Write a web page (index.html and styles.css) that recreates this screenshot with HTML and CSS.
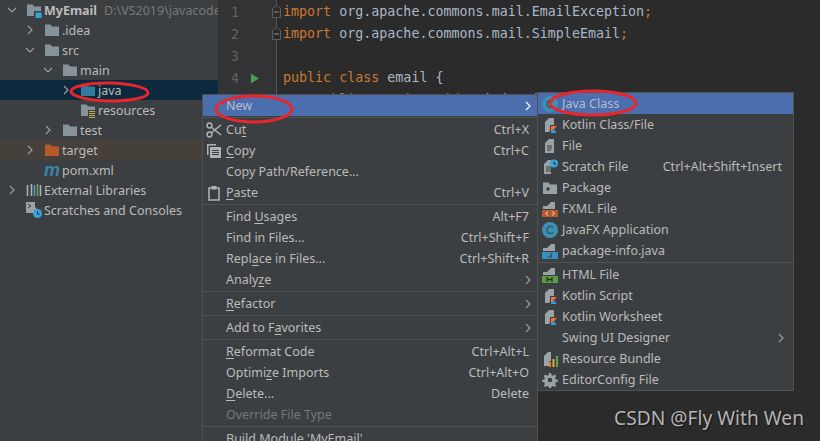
FILE: index.html
```html
<!DOCTYPE html>
<html lang="en">
<head>
<meta charset="utf-8">
<title>MyEmail</title>
<link rel="stylesheet" href="styles.css">
</head>
<body>
<svg class="sprite" width="0" height="0">
  <defs>
    <symbol id="i-folder" viewBox="0 0 16 16"><path d="M1 2.5h5.5l1.5 2h7V14H1z"/></symbol>
    <symbol id="i-chev-r" viewBox="0 0 10 10"><path d="M3 1l4 4-4 4" fill="none" stroke="#9a9da0" stroke-width="1.2"/></symbol>
    <symbol id="i-chev-d" viewBox="0 0 10 10"><path d="M1 3l4 4 4-4" fill="none" stroke="#9a9da0" stroke-width="1.2"/></symbol>
    <symbol id="i-file" viewBox="0 0 16 16"><path d="M3 5l4-4h5v14H3z" fill="#9aa2a6"/><path d="M5 8h5M5 10h5M5 12h4" stroke="#3c3f41" stroke-width="1"/></symbol>
    <symbol id="i-kotlin" viewBox="0 0 16 16"><path d="M3 5l4-4h5v7L7 15H3z" fill="#9aa2a6"/><path d="M8 8h8l-4 4 4 4H8z" fill="#3c3f41"/><path d="M9 9h6l-6 6z" fill="#f26d3d"/><path d="M9 16l3-3 3 3z" fill="#2d9fd8"/><path d="M9 15l3-3 1 1-3 3H9z" fill="#2d9fd8"/></symbol>
  </defs>
</svg>

<div class="ide">
  <aside class="tree">
    <div class="row l0"><svg class="chev"><use href="#i-chev-d"/></svg>
      <svg class="ico" viewBox="0 0 16 16"><path class="f-grey" d="M1 2.5h5.5l1.5 2h7V14H1z"/><rect x="8" y="9" width="8" height="7" fill="#3c3f41"/><rect x="9.500" y="10.500" width="6" height="6" fill="#36a3dd"/></svg>
      <b class="name">MyEmail</b><span class="path">D:\VS2019\javacode\MyEmail</span></div>
    <div class="row l1"><svg class="chev"><use href="#i-chev-r"/></svg><svg class="ico f-grey"><use href="#i-folder"/></svg><span class="name">.idea</span></div>
    <div class="row l1"><svg class="chev"><use href="#i-chev-d"/></svg><svg class="ico f-grey"><use href="#i-folder"/></svg><span class="name">src</span></div>
    <div class="row l2"><svg class="chev"><use href="#i-chev-d"/></svg><svg class="ico f-grey"><use href="#i-folder"/></svg><span class="name">main</span></div>
    <div class="row l3 selected"><svg class="chev"><use href="#i-chev-r"/></svg><svg class="ico f-blue"><use href="#i-folder"/></svg><span class="name">java</span></div>
    <div class="row l3"><span class="chev"></span>
      <svg class="ico" viewBox="0 0 16 16"><path class="f-grey" d="M1 2.500h5.500l1.500 2h7V14H1z"/><rect x="8" y="8" width="8" height="8" fill="#3c3f41"/><path d="M9 9.500h6M9 11.500h6M9 13.500h6M9 15.500h6" stroke="#c9a94e"/></svg>
      <span class="name">resources</span></div>
    <div class="row l2"><svg class="chev"><use href="#i-chev-r"/></svg><svg class="ico f-grey"><use href="#i-folder"/></svg><span class="name">test</span></div>
    <div class="row l1 excluded"><svg class="chev"><use href="#i-chev-r"/></svg><svg class="ico f-orange"><use href="#i-folder"/></svg><span class="name">target</span></div>
    <div class="row l1"><span class="chev"></span><span class="ico pom">m</span><span class="name">pom.xml</span></div>
    <div class="row l0"><svg class="chev"><use href="#i-chev-r"/></svg>
      <svg class="ico" viewBox="0 0 16 16"><path d="M1.500 3v11M5.500 2v12" stroke="#a7afb3" stroke-width="1.600"/><path d="M8.500 3v11" stroke="#4e9fc4" stroke-width="1.600"/><path d="M11.500 2v12" stroke="#62a052" stroke-width="1.600"/><path d="M14.500 3v11" stroke="#a7afb3" stroke-width="1.600"/></svg>
      <span class="name">External Libraries</span></div>
    <div class="row l0"><span class="chev"></span>
      <svg class="ico" viewBox="0 0 16 16"><path d="M0 0h9v5l3 3v3H0z" fill="#9aa2a6"/><path d="M2 2l3 2-3 2" fill="none" stroke="#3c3f41"/><circle cx="11.500" cy="11.500" r="4.500" fill="#36a3dd"/><path d="M11.500 9v3h2" fill="none" stroke="#2b2b2b"/></svg>
      <span class="name">Scratches and Consoles</span></div>
  </aside>

  <main class="editor">
    <div class="gutter">
      <div class="gline"><span class="num">1</span></div>
      <div class="gline"><span class="num">2</span></div>
      <div class="gline"><span class="num">3</span></div>
      <div class="gline"><span class="num">4</span><svg class="run" viewBox="0 0 10 11"><path d="M1 0l9 5.500-9 5.500z"/></svg></div>
      <div class="gline"><span class="num">5</span></div>
    </div>
    <div class="code">
      <div class="line"><span class="kw">import</span> org.apache.commons.mail.EmailException<span class="kw">;</span></div>
      <div class="line"><span class="kw">import</span> org.apache.commons.mail.SimpleEmail<span class="kw">;</span></div>
      <div class="line"></div>
      <div class="line"><span class="kw">public class</span> email {</div>
      <div class="line">    <span class="kw">public static void</span> main(String[] args) {</div>
    </div>
    <svg class="fold fold-1" viewBox="0 0 9 14"><path d="M.5 3.500l4-3 4 3v9h-8z" fill="#2b2b2b" stroke="#5e6060"/><path d="M2 7h5" stroke="#8a8c8c"/></svg>
    <svg class="fold fold-2" viewBox="0 0 9 14"><path d="M.5 3.500l4-3 4 3v9h-8z" fill="#2b2b2b" stroke="#5e6060"/><path d="M2 7h5" stroke="#8a8c8c"/></svg>
  </main>
</div>

<nav class="menu main-menu">
  <div class="item active"><span class="icon"></span><span class="label">New</span><svg class="arrow"><use href="#i-chev-r"/></svg></div>
  <div class="sep"></div>
  <div class="item"><span class="icon"><svg viewBox="0 0 16 16"><circle cx="3.500" cy="3.500" r="2.400" fill="none" stroke="#afb1b3" stroke-width="1.500"/><circle cx="3.500" cy="12.500" r="2.400" fill="none" stroke="#afb1b3" stroke-width="1.500"/><path d="M5 5l10 8M5 11l10-8" stroke="#afb1b3" stroke-width="1.600"/></svg></span><span class="label">Cu<u>t</u></span><span class="key">Ctrl+X</span></div>
  <div class="item"><span class="icon"><svg viewBox="0 0 16 16"><path d="M1 1h9v1.500H2.500V12H1z" fill="#afb1b3"/><rect x="4" y="4" width="11" height="11" fill="#afb1b3"/><path d="M6 7.500h7M6 9.500h7M6 11.500h7" stroke="#3c3f41"/></svg></span><span class="label"><u>C</u>opy</span><span class="key">Ctrl+C</span></div>
  <div class="item"><span class="icon"></span><span class="label">Copy Path/Reference...</span></div>
  <div class="item"><span class="icon"><svg viewBox="0 0 16 16"><path d="M3 3h10v12H3z" fill="none" stroke="#afb1b3" stroke-width="1.600"/><rect x="5.500" y="1" width="5" height="3.500" fill="#afb1b3"/></svg></span><span class="label"><u>P</u>aste</span><span class="key">Ctrl+V</span></div>
  <div class="sep"></div>
  <div class="item"><span class="icon"></span><span class="label">Find <u>U</u>sages</span><span class="key">Alt+F7</span></div>
  <div class="item"><span class="icon"></span><span class="label">Find in Files...</span><span class="key">Ctrl+Shift+F</span></div>
  <div class="item"><span class="icon"></span><span class="label">Repl<u>a</u>ce in Files...</span><span class="key">Ctrl+Shift+R</span></div>
  <div class="item"><span class="icon"></span><span class="label">Analy<u>z</u>e</span><svg class="arrow"><use href="#i-chev-r"/></svg></div>
  <div class="sep"></div>
  <div class="item"><span class="icon"></span><span class="label"><u>R</u>efactor</span><svg class="arrow"><use href="#i-chev-r"/></svg></div>
  <div class="sep"></div>
  <div class="item"><span class="icon"></span><span class="label">Add to F<u>a</u>vorites</span><svg class="arrow"><use href="#i-chev-r"/></svg></div>
  <div class="sep"></div>
  <div class="item"><span class="icon"></span><span class="label"><u>R</u>eformat Code</span><span class="key">Ctrl+Alt+L</span></div>
  <div class="item"><span class="icon"></span><span class="label">Optimi<u>z</u>e Imports</span><span class="key">Ctrl+Alt+O</span></div>
  <div class="item"><span class="icon"></span><span class="label"><u>D</u>elete...</span><span class="key">Delete</span></div>
  <div class="item disabled"><span class="icon"></span><span class="label">Override File Type</span></div>
  <div class="sep"></div>
  <div class="item"><span class="icon"></span><span class="label">Build Module 'MyEmail'</span></div>
</nav>

<nav class="menu sub-menu">
  <div class="item active"><span class="icon"><svg viewBox="0 0 16 16"><circle cx="8" cy="8" r="8" fill="#3f8fae"/><path d="M11 5.500a3.500 3.500 0 1 0 0 5" fill="none" stroke="#27566b" stroke-width="1.500"/></svg></span><span class="label">Java Class</span></div>
  <div class="item"><span class="icon"><svg><use href="#i-kotlin"/></svg></span><span class="label">Kotlin Class/File</span></div>
  <div class="item"><span class="icon"><svg><use href="#i-file"/></svg></span><span class="label">File</span></div>
  <div class="item"><span class="icon"><svg viewBox="0 0 16 16"><path d="M2 5l4-4h3v14H2z" fill="#9aa2a6"/><path d="M4 8h5M4 10h5M4 12h5" stroke="#3c3f41"/><circle cx="12" cy="4.500" r="4" fill="#36a3dd"/><path d="M12 2.500v2.500h2" fill="none" stroke="#2b2b2b"/></svg></span><span class="label">Scratch File</span><span class="key">Ctrl+Alt+Shift+Insert</span></div>
  <div class="item"><span class="icon"><svg viewBox="0 0 16 16"><path d="M1 2.500h5.500l1.500 2h7V14H1z" fill="#9aa2a6"/><circle cx="6" cy="9" r="1.800" fill="#3c3f41"/></svg></span><span class="label">Package</span></div>
  <div class="item"><span class="icon"><svg viewBox="0 0 16 16"><path d="M5 5l4-4h4v7H1V5z" fill="#9aa2a6"/><rect y="9" width="16" height="7" fill="#b8592c"/><path d="M6 10.500l-2.500 2 2.500 2M10 10.500l2.500 2-2.500 2" fill="none" stroke="#e8d8c8"/></svg></span><span class="label">FXML File</span></div>
  <div class="item"><span class="icon"><svg viewBox="0 0 16 16"><circle cx="8" cy="8" r="8" fill="#3f8fae"/><path d="M11 5.500a3.500 3.500 0 1 0 0 5" fill="none" stroke="#27566b" stroke-width="1.500"/></svg></span><span class="label">JavaFX Application</span></div>
  <div class="item"><span class="icon"><svg viewBox="0 0 16 16"><path d="M5 5l4-4h4v7H1V5z" fill="#9aa2a6"/><rect y="9" width="16" height="7" fill="#3a8dba"/><path d="M9 10.500v3.500H6.500" fill="none" stroke="#1f3f50" stroke-width="1.200"/></svg></span><span class="label">package-info.java</span></div>
  <div class="sep"></div>
  <div class="item"><span class="icon"><svg viewBox="0 0 16 16"><path d="M5 5l4-4h4v7H1V5z" fill="#9aa2a6"/><rect y="9" width="16" height="7" fill="#5c9a4c"/><path d="M5 10v5M10 10v5M5 12.500h5" stroke="#24381e" stroke-width="1.300"/></svg></span><span class="label">HTML File</span></div>
  <div class="item"><span class="icon"><svg><use href="#i-kotlin"/></svg></span><span class="label">Kotlin Script</span></div>
  <div class="item"><span class="icon"><svg><use href="#i-kotlin"/></svg></span><span class="label">Kotlin Worksheet</span></div>
  <div class="item"><span class="icon"></span><span class="label">Swing UI Designer</span><svg class="arrow"><use href="#i-chev-r"/></svg></div>
  <div class="item"><span class="icon"><svg viewBox="0 0 16 16"><path d="M2 5l4-4h3v14H2z" fill="#9aa2a6"/><rect x="7.500" y="10" width="8.500" height="6" fill="#3c3f41"/><rect x="7" y="11" width="2" height="5" fill="#e8782d"/><rect x="10.500" y="8" width="2" height="8" fill="#e8a33d"/><rect x="14" y="5" width="2" height="11" fill="#62a052"/></svg></span><span class="label">Resource Bundle</span></div>
  <div class="item"><span class="icon"><svg viewBox="0 0 16 16"><path d="M7 1h2l.4 2 1.700.7 1.700-1.100 1.400 1.400-1.100 1.700.7 1.700 2 .4v2l-2 .4-.7 1.700 1.100 1.700-1.400 1.400-1.700-1.100-1.700.7-.4 2H7l-.4-2-1.700-.7-1.700 1.100-1.400-1.400 1.100-1.700-.7-1.700-2-.4v-2l2-.4.7-1.700-1.100-1.700 1.400-1.400 1.700 1.100 1.700-.7z" fill="#9aa2a6"/><circle cx="8" cy="8" r="2.300" fill="#3c3f41"/></svg></span><span class="label">EditorConfig File</span></div>
</nav>

<svg class="marks" viewBox="0 0 820 441">
  <ellipse cx="109.500" cy="92" rx="38.500" ry="9" transform="rotate(1 109.500 92)"/>
  <ellipse cx="254" cy="109" rx="38" ry="13"/>
  <ellipse cx="593" cy="103" rx="43" ry="12"/>
</svg>

<div class="watermark">CSDN @Fly With Wen</div>
</body>
</html>
```
FILE: styles.css
```css
* { box-sizing: border-box; }
html, body { margin: 0; padding: 0; }
body {
  width: 820px;
  height: 441px;
  overflow: hidden;
  position: relative;
  background: #2b2b2b;
  font-family: "Noto Sans", "Open Sans", sans-serif;
  font-size: 12.500px;
  color: #bbbbbb;
}
.sprite { position: absolute; }
.ide { display: flex; height: 441px; }

/* project tree */
.tree { width: 218px; flex: none; background: #3c3f41; overflow: hidden; }
.row { display: flex; align-items: center; height: 20px; white-space: nowrap; overflow: hidden; }
.l0 { padding-left: 3px; }
.l1 { padding-left: 21px; }
.l2 { padding-left: 39px; }
.l3 { padding-left: 57px; }
.chev { width: 18px; height: 10px; flex: none; margin-right: 5px; }
.ico { width: 16px; height: 16px; flex: none; margin-right: 2px; }
.path { margin-left: 7px; color: #787878; }
.selected { background: #0d293e; }
.excluded { background: #45403a; }
.f-grey { fill: #87939a; }
.f-blue { fill: #2f7ca0; }
.f-orange { fill: #b8592c; }
.pom {
  font: italic bold 18px/16px "Liberation Sans", sans-serif;
  color: #3a86a8;
  letter-spacing: -1px;
}

/* editor */
.editor { flex: 1; display: flex; position: relative; min-width: 0; }
.gutter { width: 59px; flex: none; background: #313335; border-right: 1px solid #555555; padding-top: 1px; }
.gline { height: 22px; display: flex; align-items: center; padding-left: 13px; gap: 11px; }
.num { font: 13.300px "DejaVu Sans Mono", monospace; color: #606366; width: 8px; }
.run { width: 9px; height: 11px; fill: #499c54; }
.code {
  padding: 1px 0 0 6px;
  font: 13.340px/22px "DejaVu Sans Mono", monospace;
  color: #a9b7c6;
}
.line { height: 22px; white-space: pre; }
.kw { color: #cc7832; }
.fold { position: absolute; left: 54px; width: 9px; height: 14px; }
.fold-1 { top: 5px; }
.fold-2 { top: 27px; }

/* menus */
.menu {
  position: absolute;
  background: #3c3f41;
  border: 1px solid #515151;
  overflow: hidden;
  white-space: nowrap;
}
.main-menu { left: 202px; top: 94px; width: 336px; height: 360px; }
.sub-menu { left: 537px; top: 92px; width: 257px; height: 299px; }
.item { display: flex; align-items: center; height: 21px; padding-right: 8px; }
.icon { width: 23px; height: 16px; flex: none; padding-left: 3px; display: block; }
.icon svg { width: 16px; height: 16px; display: block; }
.label { flex: 1; }
.arrow { width: 10px; height: 10px; flex: none; margin-right: -4px; }
.active { background: #4b6eaf; color: #b6bdca; }
.active .arrow { filter: brightness(1.6); }
.disabled { color: #777777; }
.sep { height: 3px; padding: 1px 0; }
.sep::before { content: ""; display: block; height: 1px; background: #515151; }
.sub-menu .item { padding-right: 11px; }
.sub-menu .icon { width: 24px; padding-left: 4px; }
u { text-underline-offset: 2px; }

/* annotations */
.marks { position: absolute; left: 0; top: 0; width: 820px; height: 441px; pointer-events: none; }
.marks ellipse { fill: none; stroke: #e9262c; stroke-width: 3; }
.watermark {
  position: absolute;
  right: 16px;
  top: 405px;
  font-size: 19.200px;
  line-height: 26px;
  color: #b4b4b4;
  text-shadow: 1px 1px 1px #151515;
}
```
